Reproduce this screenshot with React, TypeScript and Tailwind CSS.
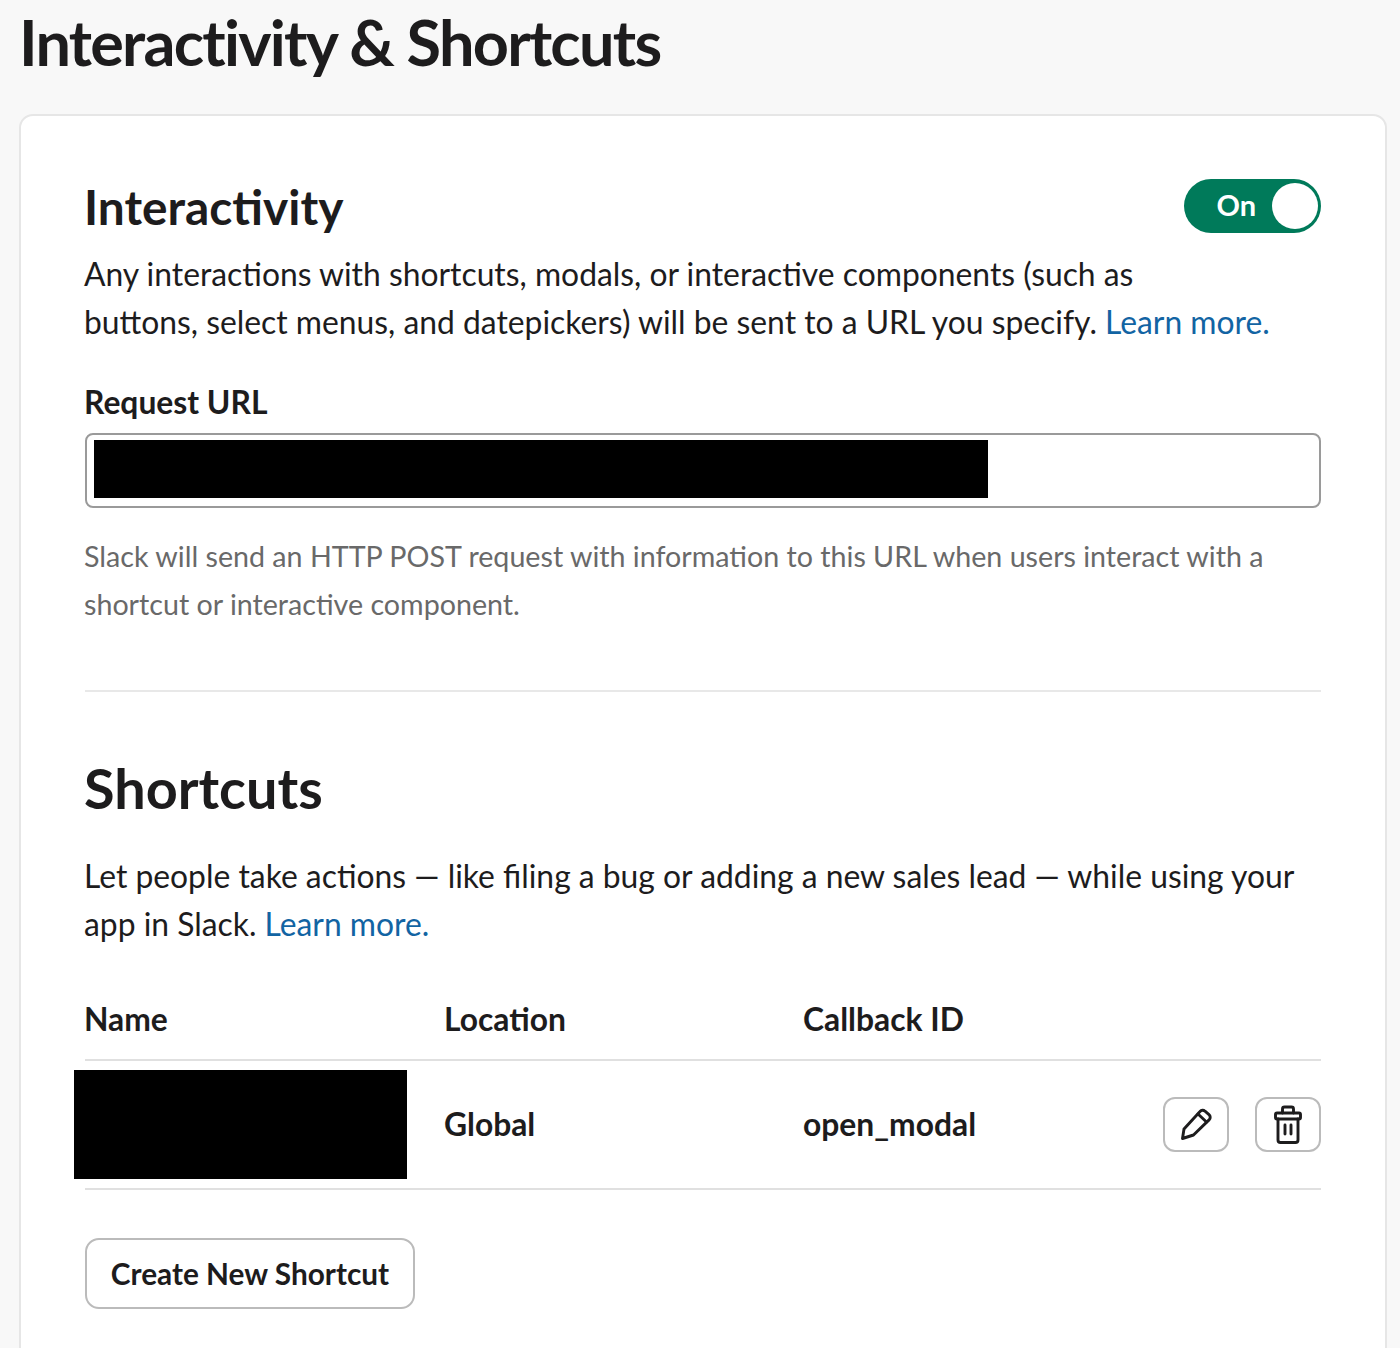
const PencilIcon = () => (
  <svg width="40" height="40" viewBox="4 4 40 40" fill="none" stroke="#1d1c1d" strokeWidth="2.900" strokeLinecap="round" strokeLinejoin="round">
    <path d="M12 28 28 10.500a3.500 3.500 0 0 1 5-.3l4 3.400a3.500 3.500 0 0 1 .3 5L21.500 34l-11 3.500z" />
    <path d="m26 13 8.500 8" />
  </svg>
);

const TrashIcon = () => (
  <svg width="40" height="40" viewBox="3 4 40 40" fill="none" stroke="#1d1c1d" strokeWidth="2.900" strokeLinecap="round" strokeLinejoin="round">
    <path d="M17.500 12V8a2 2 0 0 1 2-2h7a2 2 0 0 1 2 2v4" />
    <rect x="10.500" y="12" width="25" height="6" rx="1.500" />
    <path d="M13 18v21a2.500 2.500 0 0 0 2.500 2.500h15a2.500 2.500 0 0 0 2.500-2.500V18" />
    <path d="M20 24v9M26 24v9" />
  </svg>
);

const App = () => {
  return (
    <div className="h-[1348px] overflow-hidden bg-[#f8f8f8] font-['Lato','Liberation_Sans',sans-serif] text-[#1d1c1d]">
      <h1 className="h-[114px] pl-[19px] pt-[6px] text-[63px] leading-[72px] font-bold tracking-[-1.75px]">Interactivity &amp; Shortcuts</h1>

      <div className="ml-[19px] mr-[13px] h-[1300px] rounded-[14px] border-2 border-[#e6e6e6] bg-white pl-[63px] pr-[64px] pt-[59px]">
        {/* Interactivity */}
        <div className="flex items-start justify-between">
          <h2 className="text-[47.800px] leading-[64px] font-bold">Interactivity</h2>
          <div className="mt-[4px] flex h-[54px] w-[137px] items-center justify-end rounded-full bg-[#007a5a] pr-[3px]">
            <span className="mr-[16px] -mt-[2px] text-[29px] leading-[40px] font-bold text-white">On</span>
            <div className="h-[46px] w-[46px] rounded-full bg-white" />
          </div>
        </div>
        <p className="mt-[11px] text-[31.830px] leading-[48px]">
          Any interactions with shortcuts, modals, or interactive components (such as
          <br />
          buttons, select menus, and datepickers) will be sent to a URL you specify. <span className="text-[#1264a3]">Learn more.</span>
        </p>

        <div className="mt-[32px] text-[31.800px] leading-[48px] font-bold">Request URL</div>
        <div className="mt-[7px] ml-px h-[75px] rounded-lg border-2 border-[#9a9a9a] pl-[7px] pt-[5px]">
          <div className="h-[58px] w-[894px] bg-black" />
        </div>
        <p className="mt-[24px] text-[28.650px] leading-[48px] text-[#696969]">
          Slack will send an HTTP POST request with information to this URL when users interact with a
          <br />
          shortcut or interactive component.
        </p>

        <div className="mt-[62px] ml-px border-t-2 border-[#e8e8e8]" />

        {/* Shortcuts */}
        <h2 className="mt-[60px] text-[55.800px] leading-[72px] font-bold">Shortcuts</h2>
        <p className="mt-[28px] text-[31.840px] leading-[48px]">
          Let people take actions — like filing a bug or adding a new sales lead — while using your
          <br />
          app in Slack. <span className="text-[#1264a3]">Learn more.</span>
        </p>

        <div className="mt-[47px] ml-px grid h-[66px] grid-cols-[359px_359px_1fr] border-b-2 border-[#e0e0e0] text-[31.800px] leading-[48px] font-bold">
          <div className="-ml-px">Name</div>
          <div>Location</div>
          <div>Callback ID</div>
        </div>
        <div className="ml-px grid h-[129px] grid-cols-[359px_359px_1fr] items-center border-b-2 border-[#e0e0e0] text-[31.800px] font-bold">
          <div className="-ml-[11px] -mt-[1px] h-[109px] w-[333px] bg-black" />
          <div className="pt-[1px]">Global</div>
          <div className="flex items-center justify-between">
            <span className="pt-[1px]">open_modal</span>
            <div className="flex gap-[26px]">
              <button className="flex h-[55px] w-[66px] items-center justify-center rounded-[12px] border-2 border-[#bbbbbb]">
                <PencilIcon />
              </button>
              <button className="flex h-[55px] w-[66px] items-center justify-center rounded-[12px] border-2 border-[#bbbbbb]">
                <TrashIcon />
              </button>
            </div>
          </div>
        </div>

        <button className="mt-[48px] ml-px flex h-[71px] w-[330px] items-center justify-center rounded-[14px] border-2 border-[#bbbbbb] pt-[2px] text-[29.800px] font-bold">
          Create New Shortcut
        </button>
      </div>
    </div>
  );
};

export default App;
